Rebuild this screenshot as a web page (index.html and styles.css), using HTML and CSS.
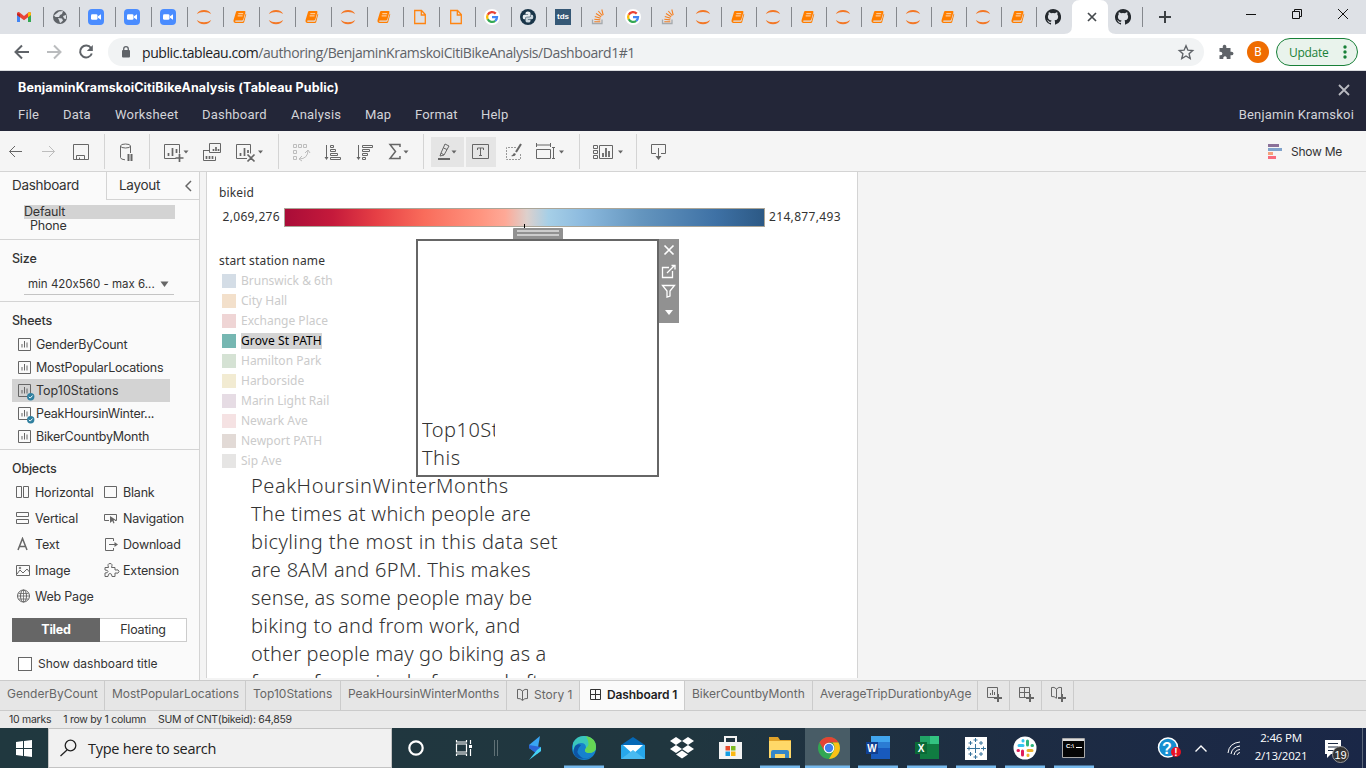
FILE: index.html
```html
<!DOCTYPE html>
<html lang="en">
<head>
<meta charset="utf-8">
<title>BenjaminKramskoiCitiBikeAnalysis</title>
<link rel="stylesheet" href="styles.css">
</head>
<body>
<svg class="defs" width="0" height="0">
  <symbol id="gmail" viewBox="0 0 16 16"><path d="M1 4v9h3V7z" fill="#4285f4"/><path d="M15 4v9h-3V7z" fill="#34a853"/><path d="M1 4.500Q1 2.500 3 3l5 4 5-4q2-.5 2 1.500V6l-7 5.200L1 6z" fill="#ea4335"/><path d="M12 4l1.500-1Q15 3 15 5v1l-3 2.300z" fill="#fbbc04"/><path d="M1 4.500L4 5v3.300L1 6z" fill="#c5221f"/></symbol>
  <symbol id="globe" viewBox="0 0 16 16"><circle cx="8" cy="8" r="7" fill="#5f6368"/><path d="M7 2.500L11 2l-1 3-2 1-1 2H3.500L2 6.500M6 9l4 .500 1 2-2 2-1 .500-1-3zM11 7l3-1v4l-2-.500z" fill="#dee1e6"/></symbol>
  <symbol id="zoom" viewBox="0 0 16 16"><rect width="16" height="16" rx="4" fill="#4a8cff"/><rect x="3" y="5.300" width="6.500" height="5.500" rx="1.300" fill="#fff"/><path d="M10 7.300l3-2v5.500l-3-2z" fill="#fff"/></symbol>
  <symbol id="jup" viewBox="0 0 16 16"><path d="M.8 5Q3 .9 8 .9T15.200 5Q12.500 2.900 8 2.900T.8 5zM.8 11Q3 15.300 8 15.300T15.200 11Q12.500 13.200 8 13.200T.8 11z" fill="#f37726"/></symbol>
  <symbol id="book" viewBox="0 0 16 16"><path d="M5.200 2h7.300q1.200 0 .9 1.200L11.300 10.500q-.3 1-1.300 1H3.600q-.8.600-.2 1.200h7.200q.7 0 .9-.7L13.700 4.500q.7.300.5 1.100L12.200 13q-.3 1-1.300 1H3Q1 13.500 1.500 11.300L4 3Q4.200 2 5.200 2z" fill="#ff7e00"/><path d="M6.300 4.700h4.900M5.700 6.900h4.900" stroke="#ffe6cc" stroke-width=".9"/></symbol>
  <symbol id="doc" viewBox="0 0 16 16"><path d="M2.700 1.500h6.800l3.800 4v9H2.700zM9.300 1.500V6h4" fill="none" stroke="#ff8410" stroke-width="1.300"/></symbol>
  <symbol id="goog" viewBox="0 0 16 16"><circle cx="8" cy="8" r="8" fill="#fff"/><g fill="none" stroke-width="2.300"><path d="M11.700 4.600A5 5 0 0 0 3.700 5.700" stroke="#ea4335"/><path d="M3.700 5.700a5 5 0 0 0 0 4.700" stroke="#fbbc05"/><path d="M3.700 10.300a5 5 0 0 0 7.500 1.500" stroke="#34a853"/><path d="M8 8.200h5a5 5 0 0 1-1.800 3.700" stroke="#4285f4"/></g></symbol>
  <symbol id="py" viewBox="0 0 16 16"><circle cx="8" cy="8" r="8" fill="#193549"/><path fill="#e8eef2" d="M7.800 2.500q2.700 0 2.700 1.600v2.400q0 1.200-1.300 1.200H6.700q-1.500 0-1.500 1.500v1.100H4Q2.700 10.300 2.700 8T4.200 5.700h3.900v-.5H5.500V4.100q0-1.600 2.300-1.600z"/><path fill="#c9d5dd" d="M8.200 13.500q-2.700 0-2.700-1.600V9.500q0-1.200 1.300-1.200h2.500q1.500 0 1.500-1.500V5.700H12q1.300 0 1.300 2.300t-1.500 2.300H7.900v.5h2.600v1.100q0 1.600-2.300 1.600z"/></symbol>
  <symbol id="so" viewBox="0 0 16 16"><path d="M2.500 10.500v4h9.500v-4" fill="none" stroke="#a5a9ad" stroke-width="1.300"/><path d="M4.300 12.700h6M4.300 10.300l6 .6M4.800 7.500l5.800 1.800M6 4.500l5.200 3.200M8.300 2l4 4.700M11.800.5l1.400 5.700" stroke="#f48024" stroke-width="1.100"/></symbol>
  <symbol id="gh" viewBox="0 0 16 16"><path fill="#24292e" d="M8 0a8 8 0 0 0-2.530 15.590c.4.070.55-.17.55-.38v-1.340c-2.230.48-2.700-1.070-2.700-1.070-.36-.92-.89-1.170-.89-1.170-.73-.5.050-.49.050-.49.810.060 1.230.83 1.230.83.720 1.230 1.880.87 2.340.67.070-.52.280-.88.510-1.080-1.780-.2-3.640-.89-3.640-3.950 0-.87.310-1.590.82-2.150-.08-.2-.36-1.020.080-2.120 0 0 .67-.22 2.200.82a7.600 7.600 0 0 1 4 0c1.530-1.040 2.200-.82 2.200-.82.440 1.100.160 1.920.080 2.120.510.560.820 1.270.820 2.150 0 3.070-1.870 3.750-3.650 3.950.290.250.540.730.540 1.480v2.190c0 .210.150.460.550.380A8 8 0 0 0 8 0z"/></symbol>
  <symbol id="sheet" viewBox="0 0 17 17"><path d="M.5.500h12v12H.5zM4 9.500V6M6.500 9.500V3M9 9.500V4.500" fill="none" stroke="#666"/></symbol>
  <symbol id="used" viewBox="0 0 17 17"><use href="#sheet" width="17" height="17"/><circle cx="12.700" cy="12.800" r="3.700" fill="#2f7f9f"/><path d="M10.900 12.800l1.300 1.300 2.400-2.600" fill="none" stroke="#fff"/></symbol>
</svg>

<header class="browser">
  <div class="tabstrip">
    <div class="tab w"><svg><use href="#gmail"/></svg></div><div class="tab w"><svg><use href="#globe"/></svg></div><div class="tab w"><svg><use href="#zoom"/></svg></div><div class="tab w"><svg><use href="#zoom"/></svg></div><div class="tab w"><svg><use href="#zoom"/></svg></div><div class="tab w"><svg><use href="#jup"/></svg></div><div class="tab w"><svg><use href="#book"/></svg></div><div class="tab w"><svg><use href="#jup"/></svg></div><div class="tab w"><svg><use href="#book"/></svg></div><div class="tab w"><svg><use href="#jup"/></svg></div><div class="tab w"><svg><use href="#book"/></svg></div><div class="tab w"><svg><use href="#doc"/></svg></div><div class="tab w"><svg><use href="#doc"/></svg></div><div class="tab w"><svg><use href="#goog"/></svg></div>
    <div class="tab"><svg><use href="#py"/></svg></div><div class="tab"><span class="tds">tds</span></div><div class="tab"><svg><use href="#so"/></svg></div><div class="tab"><svg><use href="#goog"/></svg></div><div class="tab"><svg><use href="#so"/></svg></div><div class="tab"><svg><use href="#jup"/></svg></div><div class="tab"><svg><use href="#book"/></svg></div><div class="tab"><svg><use href="#jup"/></svg></div><div class="tab"><svg><use href="#book"/></svg></div><div class="tab"><svg><use href="#jup"/></svg></div><div class="tab"><svg><use href="#book"/></svg></div><div class="tab"><svg><use href="#jup"/></svg></div><div class="tab"><svg><use href="#book"/></svg></div><div class="tab"><svg><use href="#jup"/></svg></div><div class="tab"><svg><use href="#book"/></svg></div>
    <div class="tab nosep"><svg><use href="#gh"/></svg></div>
    <svg class="active-tab" width="52" height="34" viewBox="1064 0 52 34"><path d="M1064 34q8 0 8-8V8q0-8 8-8h20q8 0 8 8v18q0 8 8 8z" fill="#fff"/><path d="M1088 13l8 8m0-8l-8 8" stroke="#45494d" stroke-width="1.700"/></svg>
    <div class="tab after"><svg><use href="#gh"/></svg></div>
    <svg width="223" height="34" viewBox="1143 0 223 34"><path d="M1159 17h12M1165 11v12" stroke="#3c4043" stroke-width="2"/><path d="M1246 14.500h10M1292.500 11.500h7v7h-7zM1294.500 11.500v-2h7v7h-2M1338 9l10 10m0-10l-10 10" fill="none" stroke="#111"/></svg>
  </div>
  <div class="addressbar">
    <svg width="108" height="36" viewBox="0 34 108 36"><g fill="none" stroke="#5f6368" stroke-width="2"><path d="M29 52H16M22 45.500L15.500 52l6.500 6.500"/><path d="M47 52h13M54 45.500l6.500 6.500-6.500 6.500" stroke="#babcbe"/><path d="M91 48a6 6 0 1 0 .8 5.500"/></g><path d="M92.800 45v6h-6z" fill="#5f6368"/></svg>
    <div class="omnibox">
      <svg width="34" height="28" viewBox="108 38 34 28"><rect x="122" y="50" width="8" height="7.500" rx="1" fill="#5f6368"/><path d="M123.700 50.500V49a2.300 2.300 0 0 1 4.600 0v1.500" fill="none" stroke="#5f6368" stroke-width="1.300"/></svg>
      <div class="url"><b>public.tableau.com</b>/authoring/BenjaminKramskoiCitiBikeAnalysis/Dashboard1#1</div>
      <svg width="28" height="28" viewBox="1176 38 28 28"><path d="M1186 45.800l1.900 4.400 4.800.4-3.600 3.200 1.100 4.700-4.200-2.500-4.200 2.500 1.100-4.700-3.600-3.200 4.800-.4z" fill="none" stroke="#5f6368" stroke-width="1.400"/></svg>
    </div>
    <svg class="puzzle" width="36" height="36" viewBox="1208 34 36 36"><path d="M1219.500 48h3.300q-.5-3 1.700-3.200 2.300.2 1.800 3.200h4.200v3.800q2.900-.5 3 1.700-.1 2.200-3 1.800v3.700h-3.800q.4-2.700-1.700-2.800-2 .1-1.700 2.800h-3.800v-3.700q2.800.3 2.900-1.800-.1-2-2.900-1.700z" fill="#5f6368"/></svg>
    <span class="avatar">B</span>
    <div class="update"><span>Update</span><svg width="6" height="16"><circle cx="3" cy="3" r="1.700"/><circle cx="3" cy="8" r="1.700"/><circle cx="3" cy="13" r="1.700"/></svg></div>
  </div>
</header>

<div class="titlebar">
  <div class="row"><h1>BenjaminKramskoiCitiBikeAnalysis (Tableau Public)</h1><svg width="12" height="12"><path d="M1 1l10 10m0-10L1 11" stroke="#b9bac1" stroke-width="1.800"/></svg></div>
  <nav class="menu"><span>File</span><span>Data</span><span>Worksheet</span><span>Dashboard</span><span>Analysis</span><span>Map</span><span>Format</span><span>Help</span><span class="user">Benjamin Kramskoi</span></nav>
</div>

<div class="toolbar">
  <svg width="104" height="40" viewBox="0 131 104 40"><path d="M22 151.500H9.500M15 146l-5.500 5.500L15 157M73.500 144.500h15v15h-15zM76.500 159.500v-4h8v4M79.500 159.500v-2"/><path class="dim" d="M42 151.500h12.500M49 146l5.500 5.500-5.500 5.500"/></svg><i></i>
  <svg width="44" height="40" viewBox="105 131 44 40"><ellipse cx="125.500" cy="146" rx="5" ry="2"/><path d="M120.500 146v11.500q0 2 4.500 2.300M130.500 146v7"/><path d="M128.500 154v7M131.500 154v7" stroke-width="2"/></svg><i></i>
  <svg width="128" height="40" viewBox="150 131 128 40"><path d="M176 158.500h-11.500v-14h15v9M203.500 150.500h6.500M203.500 150v10.500h12v-4M209.500 143.500h11v9h-11zM247 158.500h-10.500v-14h14v9"/><path d="M168.500 156v-3M172.500 156v-8M176.500 153v-4M179.500 154v8M175.500 158h8M240.500 156v-3M244.500 156v-8M248 153v-3M247.500 154.500l7 7m0-7l-7 7M213.500 151v-2M216 151v-4M218.500 151v-2M206.500 159v-3M209.500 159v-3M212.500 159v-3" stroke-width="1.700"/><path class="fill" d="M183.500 150.500h5l-2.500 3zM258 150.500h5l-2.500 3z"/></svg><i></i>
  <svg width="144" height="40" viewBox="279 131 144 40"><path class="dim" d="M293.500 144.500h3v3h-3zM298.500 144.500h3v3h-3zM303.500 144.500h3v3h-3zM293.500 150.500h3v3h-3zM293.500 156.500h3v3h-3zM308 150q0 9-9 9M305 153l3-3 2 3M302 156l-3 3 3 2"/><path d="M326.500 145v14M330.500 145.500h3v2h-3zM330.500 149.500h5v2h-5zM330.500 153.500h7v2h-7zM330.500 157.500h10v2h-10zM358.500 145v14M362.500 145.500h10v2h-10zM362.500 149.500h7v2h-7zM362.500 153.500h5v2h-5zM362.500 157.500h3v2h-3z"/><path class="fill" d="M324.500 157h4l-2 3zM356.500 157h4l-2 3zM403.500 150.500h5l-2.500 3z"/><path d="M400 147v-2.500h-10l5.500 7-5.500 7h10V156" stroke-width="1.500"/></svg><i></i>
  <div class="toggle first"><svg width="33" height="30" viewBox="431 137 33 30"><path d="M441 153l4-9 4 2-5 9zM441 153l-1 3 4-1M443.500 148l3.500 1.500"/><path d="M438 159h12" stroke-width="2"/><path class="fill" d="M451.500 150.500h5l-2.500 3z"/></svg></div>
  <div class="toggle"><svg width="30" height="30" viewBox="466 137 30 30"><path d="M472.500 144.500h16v14h-16zM477.500 150v-2h6v2M480.500 148v7M479 155.500h3"/></svg></div>
  <svg width="83" height="40" viewBox="496 131 83 40"><path stroke-dasharray="2 1" d="M516 147.500h-9.500v12h14V153" stroke="#999"/><path d="M514 153q-2 3-3 3 4 1 5-2z" class="fill"/><path d="M521 144l-5 8" stroke-width="2"/><path d="M536.500 143v4M550.500 143v4M536.500 145h14M536.500 149.500h14v9h-14zM552 147.500h3M552 158.500h3M553.500 147.500v11"/><path class="fill" d="M559 150.500h5l-2.500 3z"/></svg><i></i>
  <svg width="56" height="40" viewBox="580 131 56 40"><path d="M593.500 145.500h4v3h-4zM593.500 150.500h4v3h-4zM593.500 155.500h4v3h-4zM599.500 145.500h13v13h-13z"/><path d="M603 157v-4M606 157v-9M609 157v-6" stroke-width="1.800"/><path class="fill" d="M618 150.500h5l-2.500 3z"/></svg><i></i>
  <svg width="44" height="40" viewBox="637 131 44 40"><path d="M656 153.500h-4.500v-9h14v9H661M658.500 148v9"/><path class="fill" d="M655.500 156h6l-3 4z"/></svg>
  <div class="showme"><svg width="14" height="15"><path d="M0 0h11v3H0z" fill="#8a7098"/><path d="M0 4h14v3H0z" fill="#80a3cb"/><path d="M0 8h5v3H0z" fill="#f5a07c"/><path d="M0 12h8v3H0z" fill="#f86b7d"/></svg>Show Me</div>
</div>

<main class="work">
  <aside class="panel">
    <div class="ptabs"><span class="on">Dashboard</span><span class="off">Layout<svg width="7" height="12"><path d="M6 1L1 6l5 5" fill="none" stroke="#666" stroke-width="1.500"/></svg></span></div>
    <div class="devices"><div class="sel">Default</div><div class="phone">Phone</div></div>
    <section class="size"><h2>Size</h2><div class="select">min 420x560 - max 6...<svg width="9" height="6"><path d="M.5.500h8L4.500 6z" fill="#666"/></svg></div></section>
    <section class="sheets"><h2>Sheets</h2>
      <div class="sheet"><svg><use href="#sheet"/></svg><span>GenderByCount</span></div>
      <div class="sheet"><svg><use href="#sheet"/></svg><span>MostPopularLocations</span></div>
      <div class="sheet picked"><svg><use href="#used"/></svg><span>Top10Stations</span></div>
      <div class="sheet"><svg><use href="#used"/></svg><span>PeakHoursinWinter...</span></div>
      <div class="sheet"><svg><use href="#sheet"/></svg><span>BikerCountbyMonth</span></div>
    </section>
    <section class="objects"><h2>Objects</h2>
      <div class="grid">
        <div><svg><path d="M.5 1.500h5v11h-5zM7.500 1.500h5v11h-5z"/></svg>Horizontal</div><div><svg><path d="M.5 1.500h12v11H.5z"/></svg>Blank</div>
        <div><svg><path d="M.5 1.500h12v4H.5zM.5 8.500h12v4H.5z"/></svg>Vertical</div><div><svg><path d="M5 9.500H.5v-6h12v6H11"/><path class="fill" d="M6 5l6 4-2.500.5 1 2.500-1 .5-1.200-2.500L6 12z"/></svg>Navigation</div>
        <div><svg><path d="M2 13L6.500 1.500 11 13M3.500 9.500h6" stroke-width="1.500"/></svg>Text</div><div><svg><path d="M9.500 4V1.500h-8v12h8V11M5 7.500h7"/><path class="fill" d="M10.500 5l3.500 2.500-3.500 2.500z"/></svg>Download</div>
        <div><svg><path d="M.5 2.500h13v10H.5zM1 11l3-4 3 3 4-4 2.500 3"/><circle cx="4" cy="5" r=".8"/></svg>Image</div><div><svg><path d="M1 4.500h3.500q-1.500-4 1.500-4t1.500 4H11V7q4-1 4 1.500T11 10v3.500H8q0-3-2-3t-2 3H1V10q3 0 3-1.500T1 7z"/></svg>Extension</div>
        <div><svg><circle cx="7.500" cy="7" r="6"/><ellipse cx="7.500" cy="7" rx="3" ry="6"/><path d="M7.500 1v12M2.500 4.500h10M1.500 7h12M2.500 10h10" stroke-width=".8"/></svg>Web Page</div>
      </div>
      <div class="switch"><b>Tiled</b><span>Floating</span></div>
      <div class="check"><i></i>Show dashboard title</div>
    </section>
  </aside>
  <div class="canvas">
    <div class="ctitle">bikeid</div>
    <div class="ramp"><span>2,069,276</span><div class="bar"></div><span>214,877,493</span></div>
    <div class="ctitle second">start station name</div>
    <ul class="legend">
      <li><i class="c1"></i><span>Brunswick &amp; 6th</span></li><li><i class="c2"></i><span>City Hall</span></li><li><i class="c3"></i><span>Exchange Place</span></li><li class="hot"><i class="c4"></i><span>Grove St PATH</span></li><li><i class="c5"></i><span>Hamilton Park</span></li><li><i class="c6"></i><span>Harborside</span></li><li><i class="c7"></i><span>Marin Light Rail</span></li><li><i class="c8"></i><span>Newark Ave</span></li><li><i class="c9"></i><span>Newport PATH</span></li><li><i class="c10"></i><span>Sip Ave</span></li>
    </ul>
    <p class="story"><span class="widest">PeakHoursinWinterMonths</span><span>The times at which people are</span><span class="wide">bicyling the most in this data set</span><span>are 8AM and 6PM. This makes</span><span class="tight">sense, as some people may be</span><span>biking to and from work, and</span><span class="tight">other people may go biking as a</span><span>form of exercise before and after</span></p>
    <div class="tick"></div>
    <div class="zone"><div class="clip">Top10Stations</div><div>This</div></div>
    <div class="handle"></div>
    <svg class="zonebar" width="20" height="84" viewBox="659 239 20 84"><path d="M664.500 245.500l9 9m0-9l-9 9" stroke-width="1.700"/><path d="M669 267.500h-6.500v10h10V271M667 273l7-7M671.500 265.500h3.500v4"/><path d="M662.500 285.500h12l-4.500 5.500v5l-3 1v-6z"/><path d="M665 310h8l-4 5z" fill="#fff" stroke="none"/></svg>
  </div>
</main>

<div class="sheettabs">
  <span>GenderByCount</span><span>MostPopularLocations</span><span>Top10Stations</span><span>PeakHoursinWinterMonths</span>
  <span class="ic"><svg><path d="M6.500 3Q4 .5 1.500 1.500v9q3-.5 5 2 2-2.500 5-2v-9Q9 .5 6.500 3zv9"/></svg>Story 1</span>
  <span class="ic on"><svg><path d="M1.500 1.500h10v10h-10zM6.500 1.500v10M1.500 6.500h10"/></svg>Dashboard 1</span>
  <span>BikerCountbyMonth</span><span>AverageTripDurationbyAge</span>
  <span class="add"><svg><path d="M9 11.500H1.500v-10h10V8M4.500 9V7M6.500 9V4M8.500 9V6"/><path d="M12 8v8M8 12h8" stroke-width="2"/></svg></span>
  <span class="add"><svg><path d="M9 11.500H1.500v-10h10V8M6.500 1.500v10M1.500 6.500h10"/><path d="M12 8v8M8 12h8" stroke-width="2"/></svg></span>
  <span class="add"><svg><path d="M6.500 3Q4 .5 1.500 1.500v9q3-.5 5 2M6.500 12V3Q9 .5 11.500 1.500V8"/><path d="M12 8v8M8 12h8" stroke-width="2"/></svg></span>
</div>
<div class="status"><span>10 marks</span><span>1 row by 1 column</span><span>SUM of CNT(bikeid): 64,859</span></div>

<footer class="taskbar">
  <svg width="48" height="40" viewBox="0 728 48 40"><path fill="#fff" d="M16 742l7-1v7h-7zM24 741l8-1v8h-8zM16 749h7v7l-7-1zM24 749h8v8l-8-1z"/></svg>
  <div class="search"><svg width="39" height="38" viewBox="49 729 39 38"><circle cx="70.500" cy="745.500" r="5.300" fill="none" stroke="#222" stroke-width="1.300"/><path d="M67 750l-6.500 6" stroke="#222" stroke-width="1.300"/></svg><span>Type here to search</span></div>
  <svg width="168" height="40" viewBox="392 728 168 40"><circle cx="416" cy="748" r="6.700" fill="none" stroke="#fff" stroke-width="2.200"/><g fill="none" stroke="#fff" stroke-width="1.200"><path d="M456.500 744h10v8h-10zM456.500 740v2h10v-2M456.500 756v-2h10v2M470.500 740v4M470.500 749v7"/><path d="M469 745h3v3h-3z" fill="#fff" stroke="none"/></g><path d="M494.500 740v16M497.500 740v16" stroke="#607176"/><path d="M540 736l-11 9v3l8 5z" fill="#39a5f3"/><path d="M529 745v3l8 6-8 6 12-9v-4z" fill="#2b65d6"/><path d="M529 760l12-9v-4l-4 3z" fill="#45d3f4"/></svg>
  <svg width="245" height="40" viewBox="560 728 245 40"><circle cx="584" cy="748" r="12" fill="#1681cd"/><path d="M573 743q4-8 12-7 10 1 11 11 0 6-8 6-5-1-2-5 0-5-5-5-6 0-8 9z" fill="#3ac6bb"/><path d="M586 736q10 2 10 11 0 6-8 6-5-1-2-5 5-3 0-12z" fill="#65d654"/><path d="M581 745q-7 7 0 12 5 4 11-1-5 4-14 2-7-4-3-12 3-3 6-1z" fill="#0d55a4"/><path d="M621 745l12-8 12 8z" fill="#0568b6"/><path d="M621 745h24v14h-24z" fill="#27a7eb"/><path d="M623 745h20l-10 9z" fill="#fff"/><path d="M621 759l12-9 12 9z" fill="#48baf1"/><path fill="#fff" d="M670 741l6-4 6 4-6 4zM682 741l6-4 6 4-6 4zM670 749l6-4 6 4-6 4zM682 749l6-4 6 4-6 4zM676 754.500l6-4 6 4-6 4z"/><path d="M719 742h23v17h-23z" fill="#f3f3f3"/><path d="M725 742v-5h11v5" fill="none" stroke="#f3f3f3" stroke-width="2"/><path d="M725.500 746h4.500v4.500h-4.500z" fill="#e74b2c"/><path d="M731 746h4.500v4.500H731z" fill="#7dba20"/><path d="M725.500 751.500h4.500v4.500h-4.500z" fill="#139de2"/><path d="M731 751.500h4.500v4.500H731z" fill="#fbb813"/><path d="M769 737h9l2 3h11v18h-22z" fill="#e1a32a"/><path d="M769 741h22v17h-22z" fill="#ffd868"/><path d="M771 758v-6q0-2 2-2h14q2 0 2 2v6h-4v-4h-10v4z" fill="#3687c8"/><path d="M564 767h40M760 767h40" stroke="#76b9ed" stroke-width="3"/></svg>
  <svg class="running" width="45" height="40" viewBox="805 728 45 40"><circle cx="829" cy="748" r="11" fill="#32a753"/><path d="M829 737a11 11 0 0 1 9.500 5.500H829l-4.800 8.300-4.700-8.300A11 11 0 0 1 829 737z" fill="#e34334"/><path d="M838.500 742.500A11 11 0 0 1 829 759l4.800-8.300q2-4-1.300-8.200z" fill="#fbc116"/><circle cx="829" cy="748" r="5.300" fill="#fff"/><circle cx="829" cy="748" r="4.200" fill="#4080ee"/><path d="M805 767h45" stroke="#76b9ed" stroke-width="3"/></svg>
  <svg width="300" height="40" viewBox="850 728 300 40"><path d="M871 736h19v6h-19z" fill="#41a5ee"/><path d="M871 742h19v6h-19z" fill="#2b7cd3"/><path d="M871 748h19v11h-19z" fill="#185abd"/><path d="M866 742h12v12h-12z" fill="#103f91"/><text x="872" y="751.500">W</text><path d="M920 736h19v8h-19z" fill="#21a366"/><path d="M930 736h9v8h-9z" fill="#33c481"/><path d="M920 744h19v15h-19z" fill="#107c41"/><path d="M915 742h12v12h-12z" fill="#0b6a37"/><text x="921" y="751.500">X</text><path d="M965 737h22v23h-22z" fill="#fff"/><path d="M975.500 744v9M971 748.500h9M975.500 738v4M973.500 740h4M975.500 755v4M973.500 757h4M967 748.500h4M969 746.500v4M981 748.500h5M983.500 746.500v4M970.500 741v4M968.500 743h4M981 741v4M979 743h4M970.500 752v4M968.500 754h4M981 752v4M979 754h4" stroke="#37739b"/><circle cx="1025" cy="748" r="11.500" fill="#fff"/><g stroke-width="3" stroke-linecap="round"><path d="M1019 745.500h4M1023 740.500v.500" stroke="#36c5f0"/><path d="M1027.500 741v4M1032 745.500h.500" stroke="#2eb67d"/><path d="M1028 750.500h4M1028 755v.500" stroke="#ecb22e"/><path d="M1022.500 751v4M1018 750.500h.500" stroke="#e01e5a"/></g><path d="M1062.500 738.500h22v19h-22z" fill="#050505" stroke="#aaa"/><path d="M1063 740h21" stroke="#ddd" stroke-width="2"/><text class="cmd" x="1070" y="748">C:\</text><path d="M1076 747.500h6" stroke="#fff"/><path d="M858 767h40M907 767h40M956 767h40M1005 767h40M1054 767h40" stroke="#76b9ed" stroke-width="3"/></svg>
  <svg width="96" height="40" viewBox="1150 728 96 40"><circle cx="1168" cy="747.500" r="9.500" fill="#168ed0" stroke="#fff" stroke-width="1.500"/><text class="q" x="1167" y="753.500">?</text><circle cx="1176" cy="752" r="5" fill="#e81123"/><text class="bang" x="1176" y="755.500">!</text><g fill="none" stroke="#fff"><path d="M1195.500 751.500l5.500-5.500 5.500 5.500" stroke-width="1.400"/><path d="M1228 753q1-10 12-11M1231 754q1-7 9-8M1234 755q1-5 6-5.500M1237 755q.500-2 3-2.500"/></g></svg>
  <div class="clock"><span>2:46 PM</span><span>2/13/2021</span></div>
  <svg width="50" height="40" viewBox="1316 728 50 40"><path d="M1325 740h16v14h-10l-4 4v-4h-2z" fill="#fff"/><path d="M1328 743.500h10M1328 747h10M1328 750.500h7" stroke="#1d2b43"/><circle cx="1340.500" cy="754.500" r="8" fill="#333" stroke="#999"/><text class="n" x="1340.500" y="758.500">19</text><path d="M1362.500 728v40" stroke="#5c687a"/></svg>
</footer>
</body>
</html>
```
FILE: styles.css
```css
* { box-sizing: border-box; }
body { margin: 0; width: 1366px; height: 768px; overflow: hidden; display: flex; flex-direction: column; font: 13px "Inter", "Liberation Sans", sans-serif; font-feature-settings: "calt" 0; color: #333; background: #f4f4f4; }
svg { display: block; flex: none; overflow: hidden; }
.defs { position: absolute; }
h1, h2, p, ul { margin: 0; padding: 0; }

.browser { height: 71px; flex: none; border-bottom: 1px solid #dadcdf; background: #fff; }
.tabstrip { height: 34px; background: #dee1e6; display: flex; align-items: center; padding-left: 8px; }
.tab { width: 35px; height: 20px; flex: none; padding: 2px 0 0 8px; border-right: 1px solid #85888d; }
.tab.w { width: 36px; }
.tab svg { width: 16px; height: 16px; }
.tab.nosep { border: 0; padding-left: 8px; }
.tab.after { padding-left: 7px; }
.active-tab { margin: 0 -8px; }
.tds { display: block; width: 16px; height: 16px; background: #355876; color: #fff; font: bold 8px/15px "Liberation Sans", sans-serif; text-align: center; }
.addressbar { height: 36px; display: flex; align-items: center; }
.omnibox { width: 1096px; height: 28px; border-radius: 14px; background: #f1f3f4; display: flex; align-items: center; margin-right: 4px; }
.url { flex: 1; font: 14px "Open Sans", sans-serif; color: #5f6368; white-space: nowrap; letter-spacing: -.43px; }
.url b { font-weight: 400; color: #202124; }
.avatar { width: 22px; height: 22px; margin-left: 3px; border-radius: 50%; background: #ef6c00; color: #fff; font: 12px/22px Roboto, sans-serif; text-align: center; }
.update { width: 82px; height: 28px; margin-left: 7px; border: 1px solid #188038; border-radius: 14px; background: #e9f3ec; display: flex; align-items: center; justify-content: space-between; padding: 0 9px 0 12px; font: 12px "Open Sans", sans-serif; letter-spacing: -.3px; color: #188038; }
.update svg { fill: #188038; }

.titlebar { height: 60px; flex: none; background: #232638; color: #d3d4d8; padding: 9px 12px 0 18px; }
.row { display: flex; justify-content: space-between; }
.row svg { margin: 4px 4px 0 0; }
h1 { font: 700 12.500px/16px "Inter", sans-serif; color: #fff; white-space: nowrap; letter-spacing: .12px; }
.menu { display: grid; grid-template-columns: 45px 52px 87px 89px 74px 50px 66px 60px 1fr; padding-top: 10px; font: 13px/18px Roboto, sans-serif; letter-spacing: .2px; white-space: nowrap; }
.user { text-align: right; }

.toolbar { height: 41px; flex: none; display: flex; align-items: center; background: #f5f5f5; border-bottom: 1px solid #d4d4d4; }
.toolbar svg { fill: none; stroke: #666; }
.toolbar .dim { stroke: #bdbdbd; }
.fill { fill: #666; stroke: none; }
.toolbar > i { width: 1px; height: 35px; background: #d4d4d4; flex: none; }
.toggle { background: #e5e5e5; height: 30px; margin-top: 2px; }
.toggle.first { margin: 2px 2px 0 7px; }
.showme { margin-left: auto; padding-right: 24px; display: flex; align-items: center; gap: 9px; font: 12px Inter, sans-serif; letter-spacing: -.25px; white-space: nowrap; }
.showme svg { stroke: none; }

.work { height: 508px; flex: none; display: flex; gap: 6px; overflow: hidden; }
.panel { width: 200px; background: #fafafa; border-right: 1px solid #d4d4d4; flex: none; letter-spacing: -.2px; }
.ptabs { display: grid; grid-template-columns: 106px 1fr; height: 27px; font: 13.500px/27px Inter, sans-serif; letter-spacing: -.3px; }
.on { padding-left: 12px; }
.off { border-left: 1px solid #d4d4d4; border-bottom: 1px solid #d4d4d4; padding: 0 7px 0 12px; display: flex; align-items: center; justify-content: space-between; }
.devices { height: 41px; padding: 6px 24px 0; border-bottom: 1px solid #d4d4d4; font-size: 12.500px; line-height: 14px; }
.sel { background: #d3d3d3; width: 151px; height: 14px; }
.phone { padding-left: 6px; }
.panel h2 { font: 500 12.500px/16px Inter, sans-serif; padding-left: 12px; }
.size { height: 62px; padding-top: 11px; border-bottom: 1px solid #d4d4d4; }
.select { margin: 6px 25px 0 24px; height: 22px; padding: 0 5px 0 4px; border-bottom: 1px solid #c4c4c4; font-size: 11.500px; letter-spacing: 0; display: flex; align-items: center; justify-content: space-between; white-space: nowrap; }
.sheets { height: 148px; padding-top: 11px; border-bottom: 1px solid #d4d4d4; }
.sheets h2 { margin-bottom: 4px; }
.sheet { height: 23px; width: 158px; margin-left: 12px; padding-left: 6px; display: flex; align-items: center; font-size: 12.500px; letter-spacing: -.25px; white-space: nowrap; }
.sheet svg { width: 17px; height: 17px; margin: 4px 1px 0 0; }
.picked { background: #d3d3d3; letter-spacing: 0; }
.objects { padding-top: 11px; }
.grid { display: grid; grid-template-columns: 88px 90px; grid-auto-rows: 26px; padding: 2px 0 0 16px; font-size: 12.500px; white-space: nowrap; }
.grid div { display: flex; align-items: center; gap: 3px; }
.grid svg { width: 16px; height: 15px; }
.grid path, .grid circle, .grid ellipse { fill: none; stroke: #666; }
.grid .fill { fill: #666; stroke: none; }
.switch { margin: 9px 0 0 12px; width: 175px; height: 24px; display: grid; grid-template-columns: 88px 87px; text-align: center; font-size: 12.500px; line-height: 22px; }
.switch b { background: #666; color: #fff; line-height: 24px; }
.switch span { background: #fff; border: 1px solid #ccc; border-left: 0; }
.check { display: flex; align-items: center; gap: 6px; margin: 14px 0 0 18px; font-size: 12px; letter-spacing: 0; white-space: nowrap; }
.check i { width: 14px; height: 14px; border: 1px solid #666; background: #fff; }

.canvas { position: relative; width: 652px; height: 506px; background: #fff; border: 1px solid #d4d4d4; border-width: 0 1px; padding: 13px 0 0 12px; overflow: hidden; flex: none; font-family: "Noto Sans", sans-serif; font-size: 12px; }
.ctitle { line-height: 16px; letter-spacing: .15px; }
.ramp { display: flex; align-items: center; height: 19px; margin-top: 7px; gap: 4px; letter-spacing: .34px; }
.ramp span { position: relative; top: -1px; }
.ramp span:first-child { width: 61px; text-align: right; white-space: nowrap; }
.bar { width: 481px; height: 19px; border: 1px solid #aaa598; background: linear-gradient(90deg, #a90c38 0, #c51a3b 10%, #e63f45 19%, #f96c5b 29%, #ff9580 41%, #fea997 46%, #ddd0cc 50.500%, #a6cfe7 55%, #8dbbdf 62%, #6596bf 74%, #3e71a5 90%, #2c5985 100%); flex: none; }
.ctitle.second { margin-top: 26px; }
.legend { list-style: none; margin-top: 2px; padding-left: 3px; }
.legend li { height: 20px; display: flex; align-items: center; gap: 5px; color: #cbcbcb; white-space: nowrap; }
.legend i { width: 14px; height: 14px; }
.legend span { line-height: 16px; margin-bottom: 1px; }
.legend .hot { color: #000; letter-spacing: .1px; }
.legend .hot span { background: #d4d4d4; }
.c1 { background: #d4dde6; } .c2 { background: #f3e0cb; } .c3 { background: #efd5d5; } .c4 { background: #76b7b2; } .c5 { background: #d5e2d4; } .c6 { background: #f2ebd2; } .c7 { background: #e6dce4; } .c8 { background: #f5e2e3; } .c9 { background: #e2dad6; } .c10 { background: #e6e5e4; }
.story { margin: 1px 0 0 32px; font-size: 20px; line-height: 28px; font-weight: 300; white-space: nowrap; letter-spacing: .3px; }
.story span { display: block; }
.story .widest { letter-spacing: .55px; }
.story .wide { letter-spacing: .43px; }
.story .tight { letter-spacing: .15px; }
.tick { position: absolute; left: 317px; top: 52px; width: 1px; height: 4px; background: #000; }
.zone { position: absolute; left: 209px; top: 67px; width: 243px; height: 238px; border: 2px solid #666; background: #fff; padding: 175px 0 0 4px; font-size: 20px; line-height: 28px; font-weight: 300; letter-spacing: .5px; }
.clip { width: 73px; overflow: hidden; white-space: nowrap; }
.handle { position: absolute; left: 306px; top: 56px; width: 50px; height: 11px; background: linear-gradient(#ccc, #ccc) 4px 2px / 42px 2px no-repeat, linear-gradient(#ccc, #ccc) 4px 6px / 42px 2px no-repeat, #919191; border-radius: 1px 1px 0 0; }
.zonebar { position: absolute; left: 452px; top: 67px; background: #919191; fill: none; stroke: #fff; stroke-width: 1.300; }

.sheettabs { height: 31px; flex: none; display: grid; grid-template-columns: 105px 141px 95px 166px 73px 105px 128px 165px 32px 32px 32px 1fr; background: #e6e6e6; border: 1px solid #cbcbcb; border-width: 1px 0; color: #666; font-size: 12px; line-height: 26px; white-space: nowrap; }
.sheettabs > span { border-right: 1px solid #cbcbcb; padding-left: 7px; }
.sheettabs svg { width: 13px; height: 13px; fill: none; stroke: #666; }
.sheettabs .ic { display: flex; align-items: center; gap: 5px; padding: 0 0 2px 9px; }
.sheettabs .on { background: #fafafa; color: #222; font-weight: 600; letter-spacing: -.1px; }
.sheettabs .on svg { stroke: #333; }
.sheettabs .add { padding-top: 5px; padding-left: 8px; }
.sheettabs .add svg { width: 17px; height: 17px; }
.status { height: 17px; flex: none; background: #eaeaea; display: flex; gap: 12px; padding-left: 9px; font-size: 10.500px; line-height: 17px; letter-spacing: -.27px; white-space: nowrap; }

.taskbar { height: 40px; flex: none; display: flex; background: linear-gradient(90deg, #20383f 0, #20363f 50%, #1d2c43 75%, #1a2747 100%); }
.search { width: 344px; height: 40px; border: 1px solid #c3c3c3; background: #f1f1f1; display: flex; align-items: center; font: 14.500px "Open Sans", sans-serif; letter-spacing: -.28px; color: #222; }
.running { background: #485c66; }
.taskbar text { font: bold 10px "Liberation Sans", sans-serif; fill: #fff; text-anchor: middle; }
.taskbar .cmd { font-size: 6px; }
.taskbar .q { font-size: 16px; }
.taskbar .n { font-size: 11px; font-weight: 400; }
.clock { width: 70px; display: flex; flex-direction: column; align-items: center; color: #fff; font: 11.500px/18px "Open Sans", sans-serif; padding-top: 1px; white-space: nowrap; letter-spacing: -.2px; }
```
